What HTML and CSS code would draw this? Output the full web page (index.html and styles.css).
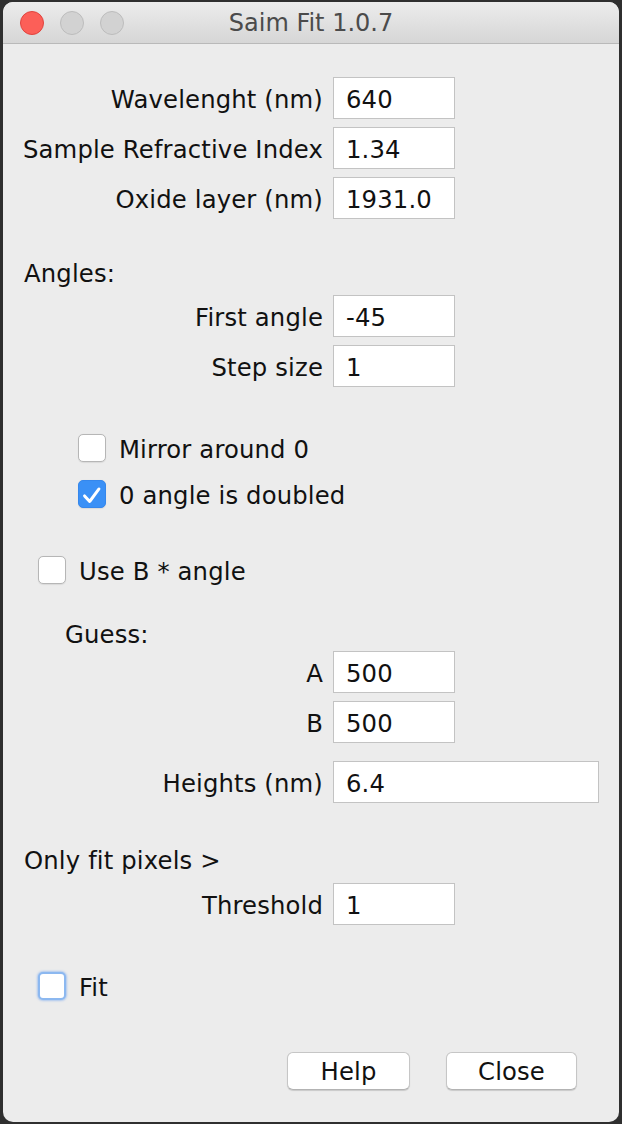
FILE: index.html
```html
<!DOCTYPE html>
<html lang="en">
<head>
<meta charset="utf-8">
<title>Saim Fit 1.0.7</title>
<link rel="stylesheet" href="styles.css">
</head>
<body>
<div class="window">
  <div class="titlebar">
    <div class="lights">
      <span class="light red"></span>
      <span class="light"></span>
      <span class="light"></span>
    </div>
    <div class="title">Saim Fit 1.0.7</div>
    <div class="spacer"></div>
  </div>

  <div class="content">
    <div class="stack first">
      <div class="row"><span class="lbl">Wavelenght (nm)</span><span class="field">640</span></div>
      <div class="row"><span class="lbl">Sample Refractive Index</span><span class="field">1.34</span></div>
      <div class="row"><span class="lbl">Oxide layer (nm)</span><span class="field">1931.0</span></div>
    </div>

    <div class="heading angles">Angles:</div>

    <div class="stack after-angles">
      <div class="row"><span class="lbl">First angle</span><span class="field">-45</span></div>
      <div class="row"><span class="lbl">Step size</span><span class="field">1</span></div>
    </div>

    <div class="checks mirror-group">
      <div class="check"><span class="box"></span><span class="ctext">Mirror around 0</span></div>
      <div class="check"><span class="box checked"><svg width="28" height="28" viewBox="0 0 28 28"><polyline points="6,15 11.5,21 21.5,7.5" fill="none" stroke="#fff" stroke-width="3.2" stroke-linecap="round" stroke-linejoin="round"/></svg></span><span class="ctext">0 angle is doubled</span></div>
    </div>

    <div class="check outer useb"><span class="box"></span><span class="ctext">Use B * angle</span></div>

    <div class="heading guess">Guess:</div>

    <div class="stack after-guess">
      <div class="row"><span class="lbl">A</span><span class="field">500</span></div>
      <div class="row"><span class="lbl">B</span><span class="field">500</span></div>
    </div>

    <div class="stack heights">
      <div class="row"><span class="lbl">Heights (nm)</span><span class="field wide">6.4</span></div>
    </div>

    <div class="heading onlyfit">Only fit pixels &gt;</div>

    <div class="stack after-onlyfit">
      <div class="row"><span class="lbl">Threshold</span><span class="field">1</span></div>
    </div>

    <div class="check outer fit"><span class="box focus"></span><span class="ctext">Fit</span></div>

    <div class="buttons">
      <button class="btn help">Help</button>
      <button class="btn closebtn">Close</button>
    </div>
  </div>
</div>
</body>
</html>
```

FILE: styles.css
```css
html, body {
  margin: 0;
  padding: 0;
}
body {
  background: #2f2f2f;
  width: 622px;
  height: 1124px;
  overflow: hidden;
  font-family: "DejaVu Sans", "Liberation Sans", sans-serif;
  font-size: 24.3px;
  letter-spacing: 0.15px;
  color: #111;
}
.window {
  margin: 2px 0 0 3px;
  width: 616px;
  height: 1120px;
  background: #ececec;
  border-radius: 10px;
  overflow: hidden;
  display: flex;
  flex-direction: column;
}
.titlebar {
  height: 41px;
  flex: none;
  display: grid;
  grid-template-columns: 1fr auto 1fr;
  align-items: center;
  background: linear-gradient(#ececec, #d6d6d6);
  border-bottom: 1px solid #b9b9b9;
}
.lights {
  display: flex;
  gap: 16px;
  padding-left: 17px;
}
.light {
  width: 24px;
  height: 24px;
  box-sizing: border-box;
  border-radius: 50%;
  background: #d2d2d2;
  border: 1px solid #bcbcbc;
}
.light.red {
  background: #fc5f58;
  border-color: #e0443e;
}
.title {
  color: #4b4b4b;
  font-size: 24px;
  letter-spacing: 0;
  line-height: 30px;
}
.content {
  display: flex;
  flex-direction: column;
  padding-top: 33px;
}
.stack {
  display: flex;
  flex-direction: column;
  gap: 8px;
}
.row {
  display: grid;
  grid-template-columns: 320px auto;
  column-gap: 10px;
  align-items: center;
  height: 42px;
}
.lbl {
  text-align: right;
  white-space: nowrap;
  padding-top: 2px;
}
.field {
  box-sizing: border-box;
  width: 122px;
  height: 42px;
  background: #fff;
  border: 1px solid #c3c3c3;
  padding-left: 12px;
  padding-top: 2px;
  display: flex;
  align-items: center;
}
.field.wide {
  width: 266px;
}
.heading {
  line-height: 30px;
  height: 30px;
}
.angles {
  margin-top: 40px;
  padding-left: 21px;
}
.after-angles {
  margin-top: 6px;
}
.checks {
  display: flex;
  flex-direction: column;
  gap: 18px;
}
.mirror-group {
  margin-top: 47px;
  padding-left: 75px;
}
.check {
  display: flex;
  align-items: center;
  gap: 13px;
  height: 28px;
}
.ctext {
  white-space: nowrap;
  padding-top: 2px;
}
.outer {
  padding-left: 35px;
}
.useb {
  margin-top: 48px;
}
.box {
  box-sizing: border-box;
  width: 28px;
  height: 28px;
  flex: none;
  border: 1px solid #b6b6b6;
  border-radius: 5px;
  background: #fff;
  box-shadow: 0 0.5px 1px rgba(0, 0, 0, 0.08);
  display: flex;
}
.box.checked {
  background: #3a90f6;
  border-color: #3587ec;
}
.box.focus {
  border: 2px solid #8cb8f0;
  box-shadow: 0 0 2px 1px rgba(120, 170, 240, 0.55);
}
.guess {
  margin-top: 37px;
  height: 28px;
  line-height: 28px;
  padding-left: 62px;
}
.after-guess {
  margin-top: 2px;
}
.heights {
  margin-top: 18px;
}
.onlyfit {
  margin-top: 43px;
  padding-left: 21px;
}
.after-onlyfit {
  margin-top: 7px;
}
.fit {
  margin-top: 47px;
}
.buttons {
  margin-top: 52px;
  display: flex;
  justify-content: flex-end;
  gap: 36px;
  padding-right: 42px;
}
.btn {
  font-family: "DejaVu Sans", "Liberation Sans", sans-serif;
  font-size: 24.3px;
  letter-spacing: 0.15px;
  color: #111;
  height: 38px;
  background: #fff;
  border: 1px solid #c6c6c6;
  border-bottom-color: #b3b3b3;
  border-radius: 6px;
  box-shadow: 0 1px 1px rgba(0, 0, 0, 0.15);
  padding: 0;
}
.btn.help {
  width: 123px;
}
.btn.closebtn {
  width: 131px;
}
```
